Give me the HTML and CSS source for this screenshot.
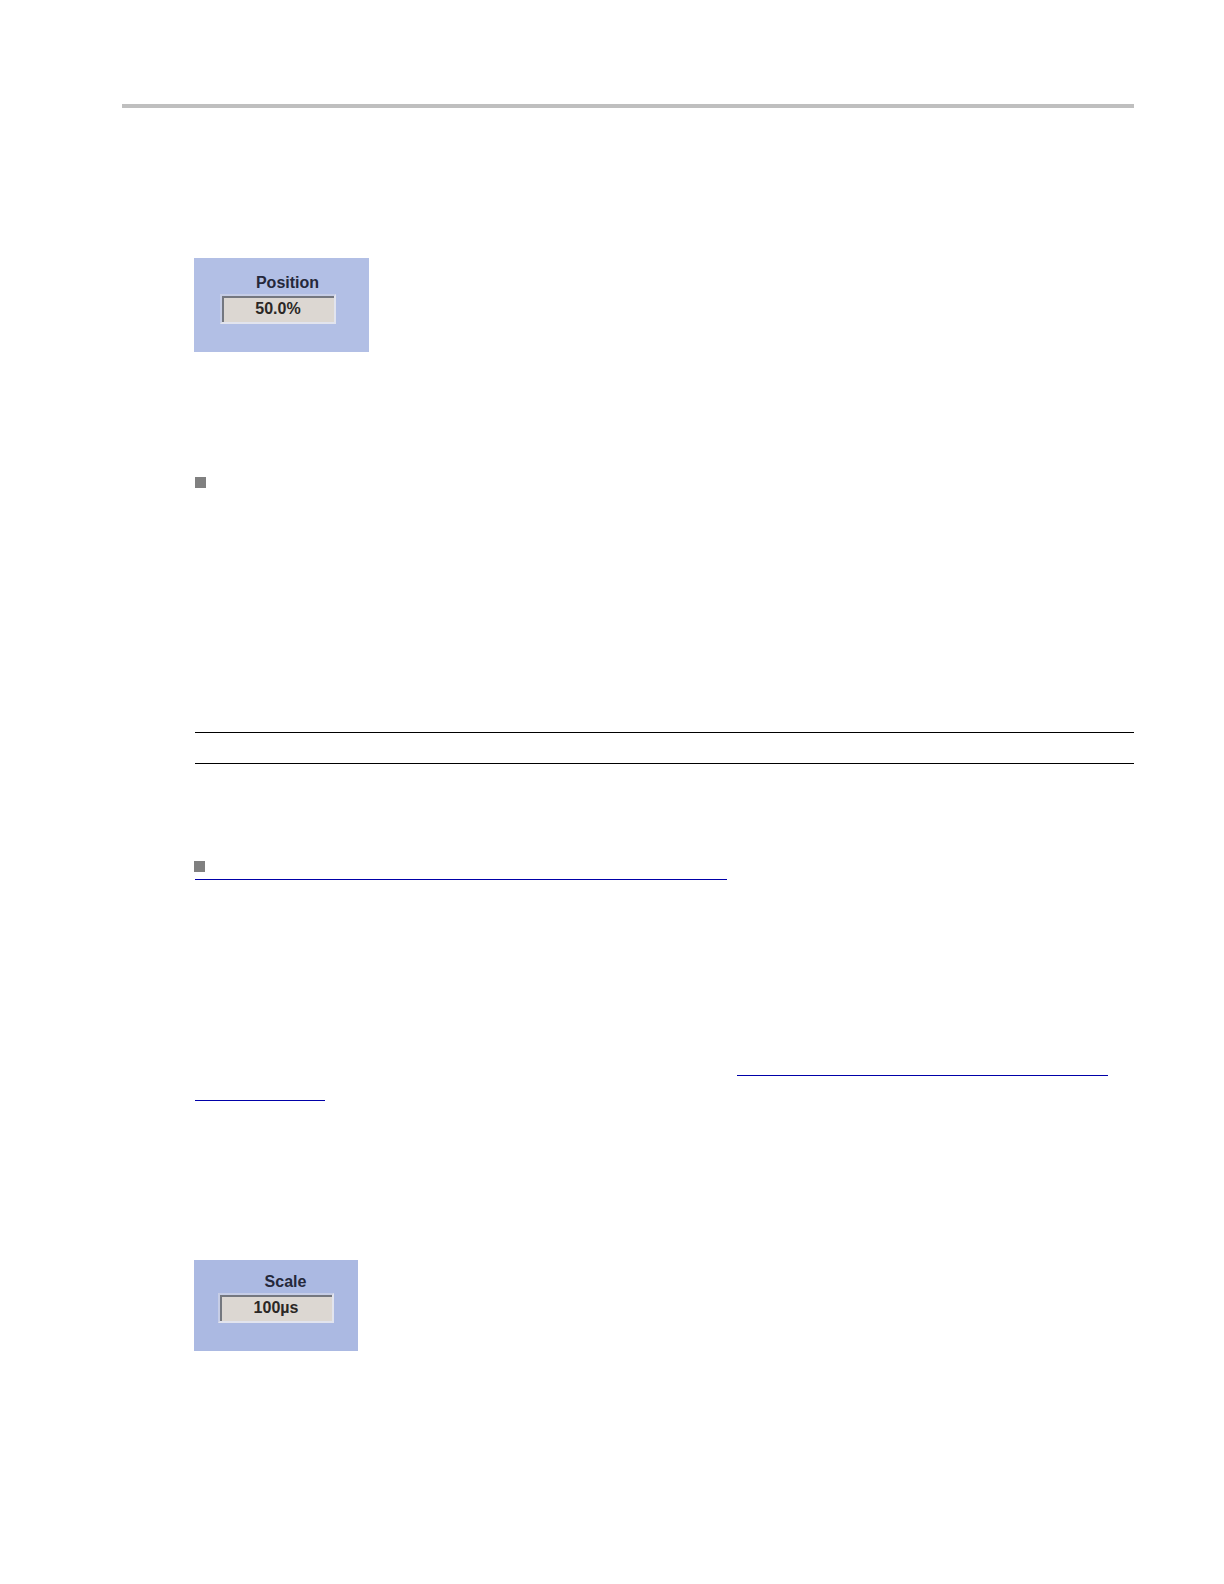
FILE: index.html
```html
<!DOCTYPE html>
<html lang="en">
<head>
  <meta charset="UTF-8" />
  <title>Position and Scale</title>
  <meta name="viewport" content="width=device-width, initial-scale=1.0" />
  <link rel="stylesheet" href="styles.css">
</head>
<body>

<header class="page-rule"></header>

<main class="content">
  <section class="panel panel-position">
    <label for="position">Position</label>
    <input type="text" id="position" value="50.0%" />
  </section>

  <div class="bullet bullet-first"></div>

  <div class="note"></div>

  <div class="bullet bullet-second"></div>
  <a class="link link-topic" href="#position"></a>

  <!-- one link that runs over two lines -->
  <div class="reference">
    <a class="link link-start" href="#scale"></a>
    <a class="link link-end" href="#scale"></a>
  </div>

  <section class="panel panel-scale">
    <label for="scale">Scale</label>
    <input type="text" id="scale" value="100µs" />
  </section>
</main>

</body>
</html>
```

FILE: styles.css
```css
* {
  box-sizing: border-box;
}
body {
  margin: 0;
  padding: 104px 90px 80px 122px;
  font-family: "Liberation Sans", Arial, sans-serif;
  font-size: 16px;
  background: white;
}
.page-rule {
  height: 4px;
  background: #bfbfbf;
}
.content {
  display: flex;
  flex-direction: column;
  padding-left: 73px;
}

/* control panels */
.panel {
  margin-left: -1px;
  color: #25283a;
  font-weight: bold;
}
.panel label {
  display: block;
  width: 116px;
  padding-left: 19px;
  line-height: 22px;
  text-align: center;
}
.panel input {
  display: block;
  width: 116px;
  height: 30px;
  padding: 0;
  border: 2px solid #e2e4ee;
  border-top-color: #c6cde6;
  border-left-color: #c6cde6;
  border-radius: 0;
  box-shadow: inset 2px 2px 0 #74777f;
  background: #dcd7d2;
  color: #2b2725;
  font: inherit;
  text-align: center;
}
.panel-position {
  width: 175px;
  margin-top: 150px;
  padding: 14px 0 28px 26px;
  background: #b2bfe5;
}
.panel-scale {
  width: 164px;
  margin-top: 159px;
  padding: 11px 0 28px 24px;
  background: #abb9e2;
}

.bullet {
  width: 11px;
  height: 11px;
  background: #808080;
}
.bullet-first {
  margin-top: 125px;
}
.bullet-second {
  margin-top: 97px;
  margin-left: -1px;
}

.note {
  height: 32px;
  margin-top: 244px;
  border-top: 1px solid #000;
  border-bottom: 1px solid #000;
}

/* links */
.link {
  display: block;
  height: 25px;
  border-bottom: 1px solid #0000a8;
}
.link-topic {
  width: 532px;
  height: 8px;
}
.reference {
  margin-top: 171px;
}
.link-start {
  width: 371px;
  margin-left: 542px;
}
.link-end {
  width: 130px;
}
```
